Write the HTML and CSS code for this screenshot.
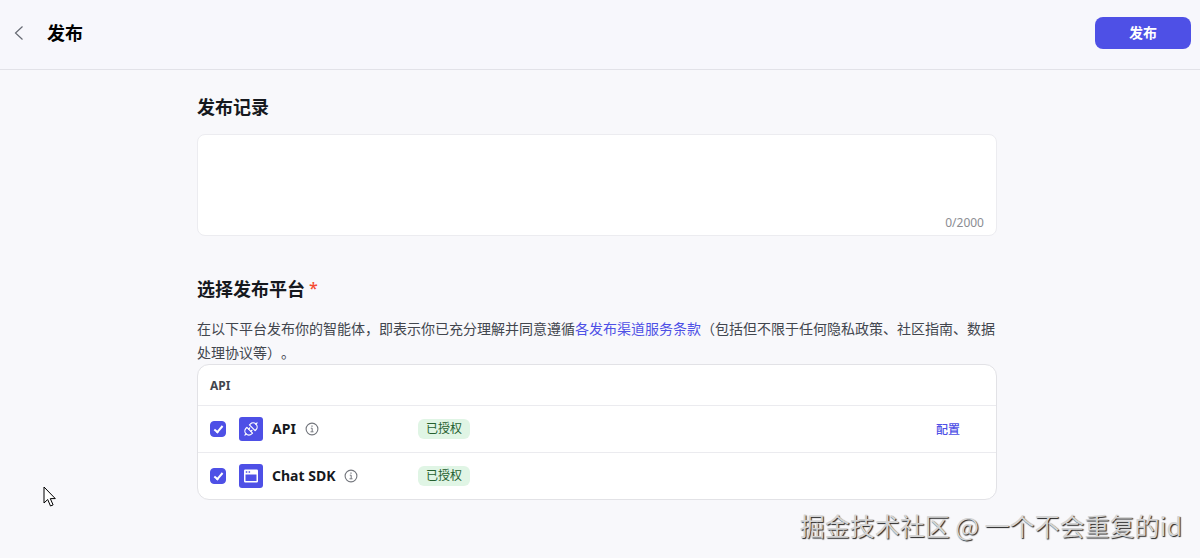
FILE: index.html
```html
<!DOCTYPE html>
<html lang="zh-CN">
<head>
  <meta charset="UTF-8">
  <meta name="viewport" content="width=device-width, initial-scale=1.0">
  <title>发布</title>
  <link rel="stylesheet" href="styles.css">
</head>
<body>
  <header class="header">
    <button type="button" class="back-btn" aria-label="返回">
      <svg width="10" height="16" viewBox="0 0 10 16" fill="none" stroke="#666a73" stroke-width="1.2">
        <path d="M8.5 1.5L1.5 8l7 6.5"/>
      </svg>
    </button>
    <h1 class="header-title">发布</h1>
    <button type="submit" class="publish-btn" form="publish-form">发布</button>
  </header>

  <form class="container" id="publish-form">
    <h2 class="title"><label for="record">发布记录</label></h2>
    <div class="record-box">
      <textarea id="record" name="record" class="record-input" maxlength="2000"></textarea>
      <div class="record-count">0/2000</div>
    </div>

    <h2 class="title">选择发布平台<span class="required">*</span></h2>
    <p class="desc">在以下平台发布你的智能体，即表示你已充分理解并同意遵循<a href="#">各发布渠道服务条款</a>（包括但不限于任何隐私政策、社区指南、数据处理协议等）。</p>

    <table class="platforms">
      <thead>
        <tr>
          <th colspan="3">API</th>
        </tr>
      </thead>
      <tbody>
        <tr>
          <td class="col-name">
            <div class="platform">
              <input type="checkbox" id="api" name="platform" value="api" checked>
              <svg class="platform-icon" width="24" height="24" viewBox="0 0 24 24" fill="none">
                <rect width="24" height="24" rx="3" fill="#4e50e6"/>
                <g transform="rotate(-45 12 12)" stroke="#fff" stroke-width="1.2" stroke-linecap="round" stroke-linejoin="round">
                  <path d="M3.4 12h1.8M18.8 12h1.8"/>
                  <path d="M10.2 8v8H9a4 4 0 0 1 0-8z"/>
                  <path d="M13.8 8v8H15a4 4 0 0 0 0-8z"/>
                  <path d="M10.2 10.4h1.6M10.2 13.6h1.6"/>
                </g>
              </svg>
              <label for="api">API</label>
              <svg class="info-icon" width="14" height="14" viewBox="0 0 14 14" fill="none" stroke="#73767d">
                <circle cx="7" cy="7" r="5.9" stroke-width="1.1"/>
                <path d="M5.8 6.2H7.2v3.4M5.5 9.8h3"/>
                <path d="M6.4 4.1h1.2" stroke-width="1.2"/>
              </svg>
            </div>
          </td>
          <td><span class="tag">已授权</span></td>
          <td class="col-action"><a href="#">配置</a></td>
        </tr>
        <tr>
          <td class="col-name">
            <div class="platform">
              <input type="checkbox" id="sdk" name="platform" value="sdk" checked>
              <svg class="platform-icon" width="24" height="24" viewBox="0 0 24 24" fill="none">
                <rect width="24" height="24" rx="3" fill="#4e50e6"/>
                <path fill="#fff" fill-rule="evenodd" d="M6.2 5.5h11.6a1.2 1.2 0 0 1 1.2 1.2v10.6a1.2 1.2 0 0 1-1.2 1.2H6.2A1.2 1.2 0 0 1 5 17.3V6.7a1.2 1.2 0 0 1 1.2-1.2zM6.5 10.5V17h11v-6.5zM6.8 7.3v1.5h1.5V7.3zM9.6 7.3v1.5h1.5V7.3z"/>
              </svg>
              <label for="sdk">Chat SDK</label>
              <svg class="info-icon" width="14" height="14" viewBox="0 0 14 14" fill="none" stroke="#73767d">
                <circle cx="7" cy="7" r="5.9" stroke-width="1.1"/>
                <path d="M5.8 6.2H7.2v3.4M5.5 9.8h3"/>
                <path d="M6.4 4.1h1.2" stroke-width="1.2"/>
              </svg>
            </div>
          </td>
          <td><span class="tag">已授权</span></td>
          <td class="col-action"></td>
        </tr>
      </tbody>
    </table>
  </form>

  <svg class="cursor" width="14" height="22" viewBox="0 0 14 22">
    <path d="M1 1v16l3.7-3.5 2.8 6.5 2.6-1.1-2.8-6.3h5z" fill="#fff" stroke="#000"/>
  </svg>
  <div class="watermark">掘金技术社区 @ 一个不会重复的id</div>
</body>
</html>
```
FILE: styles.css
```css
* {
  box-sizing: border-box;
}

body {
  margin: 0;
  min-height: 100vh;
  position: relative;
  background-color: #f8f8fb;
  color: #16191e;
  font-family: "Noto Sans", "Noto Sans CJK SC", sans-serif;
  font-size: 14px;
  text-spacing-trim: space-all;
}

a {
  color: #4e50e6;
  text-decoration: none;
}

.header {
  display: flex;
  align-items: center;
  height: 70px;
  padding: 0 9px 4px 10px;
  border-bottom: 1px solid #e2e2e8;
  background-color: #f7f7fc;
}

.back-btn {
  display: flex;
  padding: 4px;
  border: none;
  background: none;
  cursor: pointer;
}

.header-title {
  margin: 0 auto 0 19px;
  color: #000;
  font-size: 18px;
  line-height: 24px;
}

.publish-btn {
  width: 96px;
  height: 32px;
  padding: 0 0 2px;
  border: none;
  border-radius: 8px;
  background-color: #4e50e6;
  color: #fff;
  font-family: inherit;
  font-size: 14px;
  font-weight: 700;
  cursor: pointer;
}

.container {
  width: calc(100% - 38px);
  max-width: 800px;
  margin: 0 auto;
  padding: 24px 0;
  position: relative;
  right: 3px;
}

.title {
  margin: 0 0 14px;
  font-size: 18px;
  line-height: 26px;
}

.required {
  margin-left: 4px;
  color: #f54a30;
  font-size: 16px;
  font-weight: 500;
  line-height: 1;
  vertical-align: 2px;
}

.record-box {
  margin-bottom: 40px;
  padding: 4px 12px 3px;
  border: 1px solid #ececf0;
  border-radius: 8px;
  background-color: #fff;
}

.record-input {
  display: block;
  width: 100%;
  height: 75px;
  padding: 4px 0;
  border: none;
  outline: none;
  resize: none;
  background: none;
  font: inherit;
}

.record-count {
  color: #8b8d93;
  font-size: 12px;
  line-height: 18px;
  text-align: right;
}

.desc {
  margin: 0;
  padding-top: 1px;
  color: #42464e;
  line-height: 24px;
}

.platforms {
  width: 100%;
  margin-top: -1px;
  border: 1px solid #e2e2e6;
  border-radius: 12px;
  border-spacing: 0;
  background-color: #fff;
}

.platforms th {
  height: 40px;
  padding: 0 12px;
  color: #42464e;
  font-size: 12px;
  text-align: left;
}

.platforms td {
  height: 47px;
  padding: 0;
  border-top: 1px solid #ebebef;
}

.platforms .col-name {
  width: 220px;
  padding-left: 12px;
}

.platforms .col-action {
  padding-right: 36px;
  font-size: 12px;
  font-weight: 500;
  text-align: right;
}

.platform {
  display: flex;
  align-items: center;
}

.platform label {
  margin: 0 9px;
  font-weight: 700;
  line-height: 20px;
}

.platform input {
  appearance: none;
  width: 16px;
  height: 16px;
  margin: 0 13px 0 0;
  border: 1px solid #c4c5cc;
  border-radius: 4px;
}

.platform input:checked {
  display: grid;
  place-items: center;
  border-color: #4e50e6;
  background-color: #4e50e6;
}

.platform input:checked::before {
  content: "";
  width: 7px;
  height: 3px;
  margin-bottom: 2px;
  border: solid #fff;
  border-width: 0 0 2px 2px;
  transform: rotate(-50deg);
}

.tag {
  display: block;
  width: fit-content;
  padding: 0 8px;
  border-radius: 6px;
  background-color: #e0f5e5;
  color: #25602f;
  font-size: 12px;
  line-height: 20px;
}

.cursor {
  position: absolute;
  left: 43px;
  top: 486px;
}

.watermark {
  position: absolute;
  right: 18px;
  bottom: 15px;
  color: #d4d4d4;
  font-family: "Noto Sans CJK SC", sans-serif;
  font-size: 25px;
  line-height: 36px;
  text-shadow: 1px 1px 1px #222;
  white-space: nowrap;
}
```
